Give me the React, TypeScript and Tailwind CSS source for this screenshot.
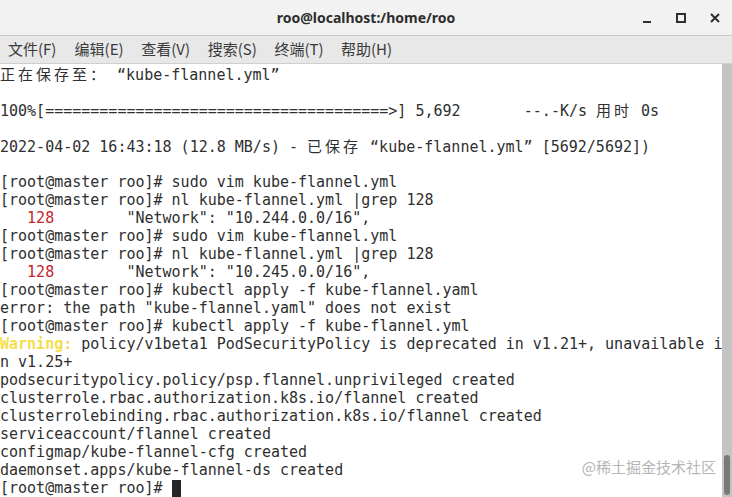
import React from "react";

const menus = ["文件(F)", "编辑(E)", "查看(V)", "搜索(S)", "终端(T)", "帮助(H)"];

// 终端里一个中文字占两格（18px）
const Wide: React.FC<{ children: React.ReactNode }> = ({ children }) => (
  <span className="font-['Noto_Sans_CJK_SC',sans-serif] tracking-[3px] leading-[18px]">{children}</span>
);

const Prompt = () => <>[root@master roo]# </>;

const Num = () => <span className="text-[#c4262e]">   128</span>;

const Line: React.FC<{ children?: React.ReactNode }> = ({ children }) => (
  <div className="h-[18px] leading-[18px] whitespace-pre">{children ?? " "}</div>
);

const App: React.FC = () => {
  return (
    <div className="w-[732px] h-[497px] flex flex-col overflow-hidden bg-white">
      {/* 标题栏 */}
      <div className="relative h-[36px] shrink-0 flex items-center justify-center bg-[#f2f2f2] border-b border-[#c9c9c9]">
        <span className="font-['Noto_Sans',sans-serif] font-bold text-[14px] text-[#2e2e2e]">
          roo@localhost:/home/roo
        </span>
        <div className="absolute right-[10px] top-0 h-[35px] flex items-center gap-[20px]">
          <svg width="14" height="14" viewBox="0 0 14 14">
            <rect x="3" y="10" width="8" height="2" fill="#2e2e2e" />
          </svg>
          <svg width="14" height="14" viewBox="0 0 14 14">
            <rect x="3" y="3" width="8" height="8" fill="none" stroke="#2e2e2e" strokeWidth="2" />
          </svg>
          <svg width="14" height="14" viewBox="0 0 14 14">
            <path d="M3 3 L11 11 M11 3 L3 11" stroke="#2e2e2e" strokeWidth="2" />
          </svg>
        </div>
      </div>

      {/* 菜单栏 */}
      <div className="h-[28px] shrink-0 flex items-center pl-[8px] bg-[#e8e8e8] border-b border-[#cfcfcf] font-['Noto_Sans_CJK_SC',sans-serif] text-[15px] text-[#3a3a3a]">
        {menus.map((m) => (
          <div key={m} className="w-[66.6px] shrink-0 whitespace-nowrap">
            {m}
          </div>
        ))}
      </div>

      {/* 终端 */}
      <div className="relative flex-1 flex min-h-0">
        <div className="flex-1 overflow-hidden pt-[1px] font-['DejaVu_Sans_Mono','Noto_Sans_CJK_SC',monospace] text-[15px] leading-[18px] text-[#2f2f2f]">
          <Line>
            <Wide>正在保存至：</Wide> “kube-flannel.yml”
          </Line>
          <Line />
          <Line>
            100%[======================================&gt;] 5,692       --.-K/s <Wide>用时</Wide> 0s
          </Line>
          <Line />
          <Line>
            2022-04-02 16:43:18 (12.8 MB/s) - <Wide>已保存</Wide> “kube-flannel.yml” [5692/5692])
          </Line>
          <Line />
          <Line>
            <Prompt />sudo vim kube-flannel.yml
          </Line>
          <Line>
            <Prompt />nl kube-flannel.yml |grep 128
          </Line>
          <Line>
            <Num />        "Network": "10.244.0.0/16",
          </Line>
          <Line>
            <Prompt />sudo vim kube-flannel.yml
          </Line>
          <Line>
            <Prompt />nl kube-flannel.yml |grep 128
          </Line>
          <Line>
            <Num />        "Network": "10.245.0.0/16",
          </Line>
          <Line>
            <Prompt />kubectl apply -f kube-flannel.yaml
          </Line>
          <Line>error: the path "kube-flannel.yaml" does not exist</Line>
          <Line>
            <Prompt />kubectl apply -f kube-flannel.yml
          </Line>
          <Line>
            <span className="font-bold text-[#f3de4e]">Warning:</span> policy/v1beta1 PodSecurityPolicy is deprecated in v1.21+, unavailable i
          </Line>
          <Line>n v1.25+</Line>
          <Line>podsecuritypolicy.policy/psp.flannel.unprivileged created</Line>
          <Line>clusterrole.rbac.authorization.k8s.io/flannel created</Line>
          <Line>clusterrolebinding.rbac.authorization.k8s.io/flannel created</Line>
          <Line>serviceaccount/flannel created</Line>
          <Line>configmap/kube-flannel-cfg created</Line>
          <Line>daemonset.apps/kube-flannel-ds created</Line>
          <Line>
            <Prompt />
            <span className="inline-block w-[9px] h-[17px] align-[-4px] bg-[#262626]" />
          </Line>
        </div>

        {/* 滚动条 */}
        <div className="w-[10px] shrink-0 bg-[#c4c4c4] flex flex-col justify-end items-center pb-[2px]">
          <div className="w-[6px] h-[40px] rounded-full bg-[#7a7a7a]" />
        </div>

        {/* 水印 */}
        <div className="absolute right-[16px] bottom-[19px] font-['Noto_Sans_CJK_SC',sans-serif] text-[15px] text-[#b5b5b5]">
          @稀土掘金技术社区
        </div>
      </div>
    </div>
  );
};

export default App;
